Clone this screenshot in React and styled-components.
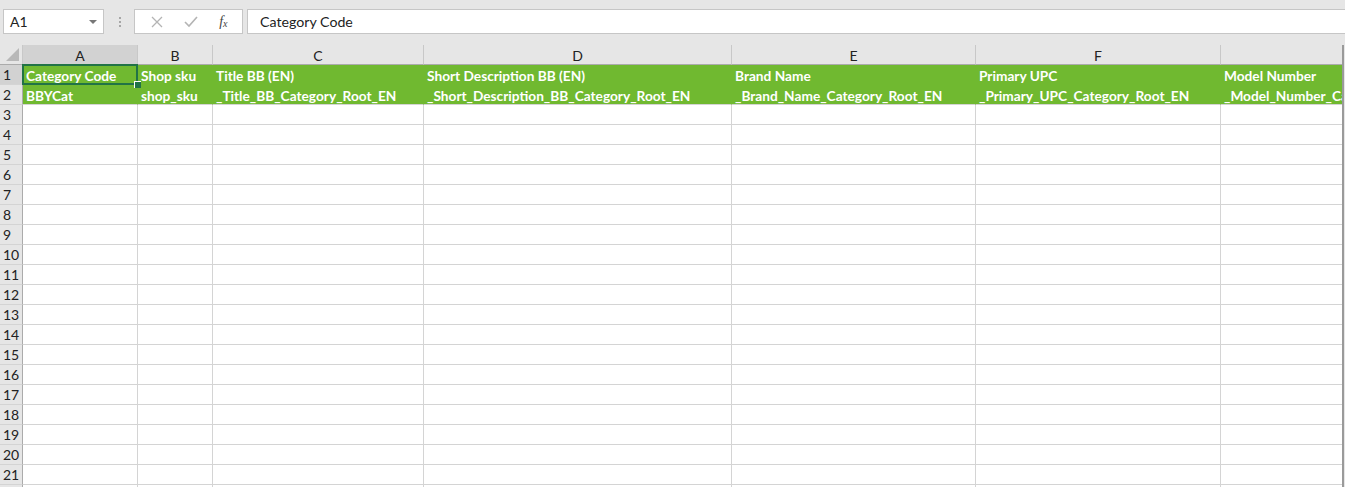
import React from 'react';
import styled, { createGlobalStyle } from 'styled-components';

const GlobalStyle = createGlobalStyle`
    body {
        margin: 0;
        background: #e6e6e6;
        font-family: "Lato", "Liberation Sans", sans-serif;
        overflow: hidden;
    }
`;

const columns = [
    { key: 'A', width: 115 },
    { key: 'B', width: 75 },
    { key: 'C', width: 211 },
    { key: 'D', width: 308 },
    { key: 'E', width: 244 },
    { key: 'F', width: 245 },
    { key: 'G', width: 160 },
];

const headerRows = [
    ['Category Code', 'Shop sku', 'Title BB (EN)', 'Short Description BB (EN)', 'Brand Name', 'Primary UPC', 'Model Number'],
    ['BBYCat', 'shop_sku', '_Title_BB_Category_Root_EN', '_Short_Description_BB_Category_Root_EN', '_Brand_Name_Category_Root_EN', '_Primary_UPC_Category_Root_EN', '_Model_Number_Category_Root_EN'],
];

const Page = styled.div`
    width: 1345px;
    height: 487px;
    background: #e6e6e6;
    overflow: hidden;
`;

const FormulaBar = styled.div`
    display: flex;
    align-items: center;
    height: 45px;
    padding: 0 0 2px 3px;
    box-sizing: border-box;
`;

const NameBox = styled.div`
    display: flex;
    align-items: center;
    justify-content: space-between;
    width: 101px;
    height: 25px;
    box-sizing: border-box;
    background: #fff;
    border: 1px solid #c6c6c6;
    padding: 0 6px 0 6px;
    font-size: 14px;
    color: #222;
`;

const Caret = styled.span`
    width: 0;
    height: 0;
    border-left: 4px solid transparent;
    border-right: 4px solid transparent;
    border-top: 4px solid #777;
`;

const Grip = styled.div`
    display: flex;
    flex-direction: column;
    gap: 2px;
    margin: 0 13px 0 15px;
    span {
        width: 2px;
        height: 2px;
        background: #a6a6a6;
    }
`;

const ButtonGroup = styled.div`
    display: flex;
    align-items: center;
    justify-content: space-around;
    width: 109px;
    height: 25px;
    box-sizing: border-box;
    background: #fff;
    border: 1px solid #c6c6c6;
    padding: 0 4px 0 6px;
`;

const FxLabel = styled.span`
    font-family: "Liberation Serif", serif;
    font-style: italic;
    font-size: 14px;
    color: #444;
    sub {
        font-size: 10px;
        vertical-align: -1px;
    }
`;

const FormulaInput = styled.div`
    flex: 1;
    height: 25px;
    box-sizing: border-box;
    margin-left: 4px;
    background: #fff;
    border: 1px solid #c6c6c6;
    border-right: none;
    padding-left: 12px;
    display: flex;
    align-items: center;
    font-size: 14.2px;
    color: #222;
`;

const Sheet = styled.div`
    display: grid;
    grid-template-columns: 23px ${columns.map(c => c.width + 'px').join(' ')};
    grid-auto-rows: 20px;
    width: 1342px;
    border-right: 2px solid #9a9a9a;
    overflow: hidden;
    background: #fff;
`;

const Corner = styled.div`
    position: relative;
    background: #e6e6e6;
    border-right: 1px solid #c8c8c8;
    border-bottom: 1px solid #ababab;
    &::after {
        content: '';
        position: absolute;
        right: 3px;
        bottom: 3px;
        width: 0;
        height: 0;
        border-left: 13px solid transparent;
        border-bottom: 13px solid #b8b8b8;
    }
`;

const ColHead = styled.div`
    background: ${({ $active }) => ($active ? '#d2d2d2' : '#e6e6e6')};
    border-right: 1px solid #c8c8c8;
    border-bottom: 1px solid #ababab;
    display: flex;
    align-items: center;
    justify-content: center;
    font-size: 14px;
    color: #222;
    padding-top: 1px;
`;

const RowHead = styled.div`
    background: ${({ $active }) => ($active ? '#d2d2d2' : '#e6e6e6')};
    border-right: 1px solid #ababab;
    border-bottom: 1px solid #d4d4d4;
    display: flex;
    align-items: center;
    padding-left: 3px;
    font-size: 14px;
    color: #222;
`;

const Cell = styled.div`
    position: relative;
    background: ${({ $filled }) => ($filled ? '#70b930' : '#fff')};
    border-right: 1px solid ${({ $filled }) => ($filled ? '#70b930' : '#d4d4d4')};
    border-bottom: 1px solid ${({ $filled, $last }) => ($filled && !$last ? '#70b930' : '#d4d4d4')};
    color: #fff;
    font-weight: 700;
    font-size: 13.7px;
    padding: 1px 0 0 3px;
    white-space: nowrap;
    overflow: visible;
    display: flex;
    align-items: center;
    z-index: ${({ $z }) => $z || 0};
`;

const Selection = styled.div`
    position: absolute;
    left: -1px;
    top: -1px;
    right: -1px;
    bottom: -1px;
    border: 2px solid #217346;
    pointer-events: none;
    &::after {
        content: '';
        position: absolute;
        right: -5px;
        bottom: -5px;
        width: 6px;
        height: 6px;
        background: #217346;
        border-left: 1px solid #fff;
        border-top: 1px solid #fff;
    }
`;

function CrossIcon() {
    return (
        <svg width="12" height="12" viewBox="0 0 12 12">
            <path d="M1 1 L11 11 M11 1 L1 11" stroke="#b4b4b4" strokeWidth="1.3" fill="none" />
        </svg>
    );
}

function CheckIcon() {
    return (
        <svg width="14" height="12" viewBox="0 0 14 12">
            <path d="M1 6 L5 10 L13 1" stroke="#b4b4b4" strokeWidth="1.6" fill="none" />
        </svg>
    );
}

export default function App() {
    const rowCount = 22;
    return (
        <Page>
            <GlobalStyle />
            <FormulaBar>
                <NameBox>
                    A1
                    <Caret />
                </NameBox>
                <Grip><span /><span /><span /></Grip>
                <ButtonGroup>
                    <CrossIcon />
                    <CheckIcon />
                    <FxLabel>f<sub>x</sub></FxLabel>
                </ButtonGroup>
                <FormulaInput>Category Code</FormulaInput>
            </FormulaBar>
            <Sheet>
                <Corner />
                {columns.map((c, i) => (
                    <ColHead key={c.key} $active={i === 0}>{c.key === 'G' ? '' : c.key}</ColHead>
                ))}
                {Array.from({ length: rowCount }, (_, r) => (
                    <React.Fragment key={r}>
                        <RowHead $active={r === 0}>{r + 1}</RowHead>
                        {columns.map((c, ci) => {
                            const filled = r < 2;
                            return (
                                <Cell
                                    key={c.key}
                                    $filled={filled}
                                    $last={r === 1}
                                    $z={r === 0 && ci === 0 ? 2 : 0}
                                >
                                    {filled ? headerRows[r][ci] : ''}
                                    {r === 0 && ci === 0 && <Selection />}
                                </Cell>
                            );
                        })}
                    </React.Fragment>
                ))}
            </Sheet>
        </Page>
    );
}
